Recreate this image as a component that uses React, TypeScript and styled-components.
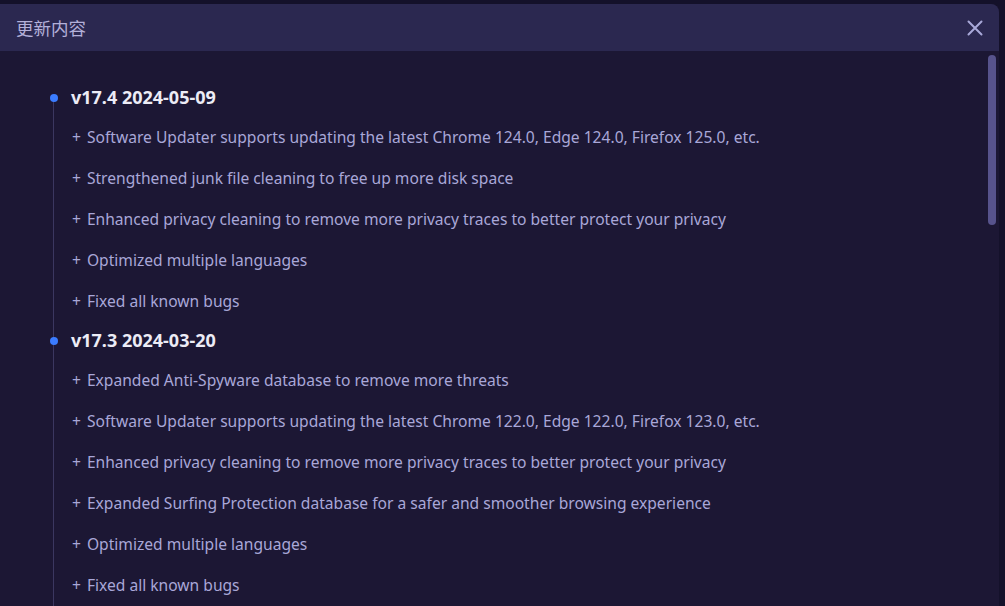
import React from "react";
import styled, { createGlobalStyle } from "styled-components";

const Global = createGlobalStyle`
  html, body { margin: 0; padding: 0; background: #14112a; overflow: hidden; }
  body { font-family: "Noto Sans", "Noto Sans CJK SC", sans-serif; }
`;

const Page = styled.div`
  width: 1005px;
  height: 606px;
  padding-top: 4px;
  box-sizing: border-box;
  display: flex;
`;

const Dialog = styled.div`
  width: 999px;
  height: 602px;
  background: #1c1734;
  border-radius: 0 8px 0 0;
  display: flex;
  flex-direction: column;
  overflow: hidden;
`;

const Header = styled.div`
  height: 47px;
  flex: none;
  background: #2b2850;
  display: flex;
  align-items: center;
  justify-content: space-between;
  padding: 0 15px 0 16px;
`;

const Title = styled.div`
  font-family: "Noto Sans CJK SC", sans-serif;
  font-size: 17.5px;
  color: #b3b0d9;
`;

const Close = styled.button`
  width: 18px;
  height: 18px;
  padding: 0;
  border: none;
  background: transparent;
  display: flex;
  align-items: center;
  justify-content: center;
`;

const Body = styled.div`
  flex: 1;
  display: flex;
  min-height: 0;
`;

const Content = styled.div`
  flex: 1;
  padding: 27px 0 0 49px;
  overflow: hidden;
`;

const Timeline = styled.div`
  position: relative;
  &::before {
    content: "";
    position: absolute;
    left: 4px;
    top: 19px;
    bottom: -200px;
    width: 1px;
    background: #3b3760;
  }
`;

const Version = styled.div`
  position: relative;
  height: 38px;
  display: flex;
  align-items: center;
  padding-left: 22px;
  font-size: 18px;
  font-weight: 700;
  color: #ececf6;
`;

const Dot = styled.span`
  position: absolute;
  left: 1px;
  top: 16px;
  width: 8px;
  height: 8px;
  border-radius: 50%;
  background: #3b7cff;
`;

const Item = styled.div`
  height: 41px;
  display: flex;
  align-items: center;
  padding-left: 23px;
  font-size: 15.6px;
  color: #a9a7d8;
  white-space: nowrap;
`;

const Plus = styled.span`
  margin-right: 6px;
`;

const ScrollTrack = styled.div`
  width: 14px;
  flex: none;
  padding: 4px 0 0 3px;
  box-sizing: border-box;
`;

const Thumb = styled.div`
  width: 8px;
  height: 170px;
  border-radius: 4px;
  background: #57538c;
`;

const data = [
  {
    v: "v17.4 2024-05-09",
    items: [
      "Software Updater supports updating the latest Chrome 124.0, Edge 124.0, Firefox 125.0, etc.",
      "Strengthened junk file cleaning to free up more disk space",
      "Enhanced privacy cleaning to remove more privacy traces to better protect your privacy",
      "Optimized multiple languages",
      "Fixed all known bugs",
    ],
  },
  {
    v: "v17.3 2024-03-20",
    items: [
      "Expanded Anti-Spyware database to remove more threats",
      "Software Updater supports updating the latest Chrome 122.0, Edge 122.0, Firefox 123.0, etc.",
      "Enhanced privacy cleaning to remove more privacy traces to better protect your privacy",
      "Expanded Surfing Protection database for a safer and smoother browsing experience",
      "Optimized multiple languages",
      "Fixed all known bugs",
    ],
  },
];

export default function App() {
  return (
    <Page>
      <Global />
      <Dialog>
        <Header>
          <Title>更新内容</Title>
          <Close aria-label="close">
            <svg width="16" height="16" viewBox="0 0 16 16">
              <path d="M1.5 1.5 L14.5 14.5 M14.5 1.5 L1.5 14.5" stroke="#a9a9d9" strokeWidth="2" strokeLinecap="round" />
            </svg>
          </Close>
        </Header>
        <Body>
          <Content>
            <Timeline>
              {data.map((g) => (
                <React.Fragment key={g.v}>
                  <Version>
                    <Dot />
                    {g.v}
                  </Version>
                  {g.items.map((t, i) => (
                    <Item key={i}>
                      <Plus>+</Plus>
                      {t}
                    </Item>
                  ))}
                </React.Fragment>
              ))}
            </Timeline>
          </Content>
          <ScrollTrack>
            <Thumb />
          </ScrollTrack>
        </Body>
      </Dialog>
    </Page>
  );
}
